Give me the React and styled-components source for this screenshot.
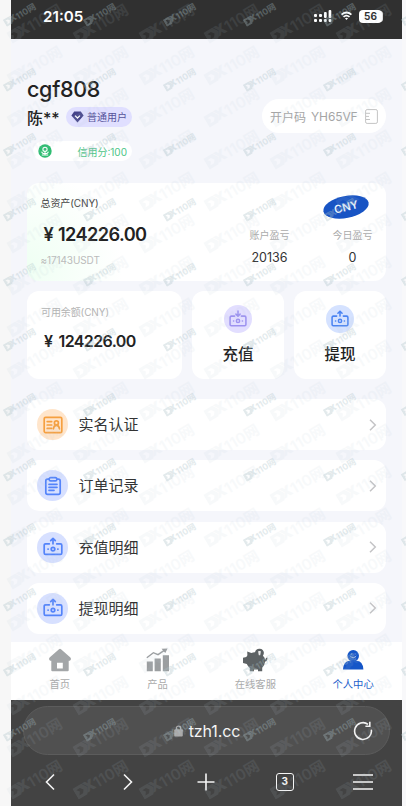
import styled, {createGlobalStyle} from 'styled-components'

const menus = [
  {id:1, name:'实名认证', icon:'card'},
  {id:2, name:'订单记录', icon:'order'},
  {id:3, name:'充值明细', icon:'money'},
  {id:4, name:'提现明细', icon:'money'},
]

const tabs = [
  {id:1, name:'首页', icon:'home'},
  {id:2, name:'产品', icon:'chart'},
  {id:3, name:'在线客服', icon:'pig'},
  {id:4, name:'个人中心', icon:'user'},
]

const MoneyIcon = ({size,down}) => (
  <svg width={size} height={size} viewBox="0 0 20 20" fill="none" stroke="currentColor" strokeWidth="1.7" strokeLinecap="round" strokeLinejoin="round">
    <path d="M6.3 6.8H2.6Q1.2 6.8 1.2 8.2V16Q1.2 17.4 2.6 17.4H17.4Q18.8 17.4 18.8 16V8.2Q18.8 6.8 17.4 6.8H13.7"/>
    <path d={down ? 'M10 1V6.6M7.7 4.6L10 6.9L12.3 4.6' : 'M10 6.8V1.4M7.7 3.6L10 1.3L12.3 3.6'}/>
    <circle cx="10" cy="12.1" r="1.8"/>
    <path d="M5 12.1H5.2M14.8 12.1H15"/>
  </svg>
)

const CardIcon = () => (
  <svg width="20" height="20" viewBox="0 0 20 20" fill="none" stroke="currentColor" strokeWidth="1.7" strokeLinecap="round" strokeLinejoin="round">
    <rect x="1.2" y="2.4" width="17.6" height="15.2" rx="1.4"/>
    <path d="M4.2 6.6H8.7M4.2 10H8.7M4.2 13.4H8.7"/>
    <circle cx="13.4" cy="7.9" r="2"/>
    <path d="M10.5 13.8Q10.7 10.3 13.4 10.3Q16.1 10.3 16.4 13.8"/>
  </svg>
)

const OrderIcon = () => (
  <svg width="20" height="20" viewBox="0 0 20 20" fill="none" stroke="currentColor" strokeWidth="1.7" strokeLinecap="round" strokeLinejoin="round">
    <path d="M6.2 3.2H4.6Q2.8 3.2 2.8 5V16.6Q2.8 18.4 4.6 18.4H15.4Q17.2 18.4 17.2 16.6V5Q17.2 3.2 15.4 3.2H13.8"/>
    <rect x="6.2" y="1.6" width="7.6" height="3.3" rx="1.4"/>
    <path d="M6 8.3H14M6 11.3H14M6 14.3H11"/>
  </svg>
)

const TabIcon = ({type}) => {
  if(type === 'home') return (
    <svg width="24" height="24" viewBox="0 0 24 24" fill="currentColor">
      <path fillRule="evenodd" d="M11 1.2Q12 .5 13 1.2L22.4 9.4Q23.8 11 22.2 12.4Q21.5 13 20.7 12.8V22.3Q20.7 23.3 19.7 23.3H4.3Q3.3 23.3 3.3 22.3V12.8Q2.5 13 1.8 12.4Q.2 11 1.6 9.4ZM9 14.8V20.6H14.8V14.8Z"/>
    </svg>
  )
  if(type === 'chart') return (
    <svg width="24" height="24" viewBox="0 0 24 24" fill="currentColor">
      <path d="M.8 13.5H6.8V23.3H.8ZM8.6 10.4H14.8V23.3H8.6ZM16.8 7.3H23V23.3H16.8Z"/>
      <path d="M.8 9.7L7.4 4.7L12 6.6L19 1.8" fill="none" stroke="currentColor" strokeWidth="1.4"/>
      <path d="M15.5.7L21.6 .5L19.3 5Z"/>
    </svg>
  )
  if(type === 'pig') return (
    <svg width="26" height="24" viewBox="0 0 26 24" fill="currentColor">
      <path d="M5.2 3.6L9.4 5Q11.3 4.2 13 4.3A4.5 4.5 0 0 1 21.9 4.8Q21.9 6.5 20.9 7.8Q22.8 9.5 23.1 11.4Q24 11.5 23.9 10L25.4 9.5Q25.7 13.3 23.2 13.6Q22.8 17.2 20.2 19.7V23.3H16V21.6H12V23.3H7.8V20Q5.8 18.4 4.8 16L1 15V9.7L4.3 9.1Q4.7 8.1 5.4 7.2Z"/>
      <path d="M16.3 2.9H18.7V4.8L18.2 7.2H16.8L16.3 4.8Z" fill="#fff" opacity=".85"/>
    </svg>
  )
  return (
    <svg width="24" height="24" viewBox="0 0 24 24" fill="currentColor">
      <circle cx="12.2" cy="7.8" r="5.8"/>
      <path d="M2 21.5Q2.4 12.9 9.2 12.7H15.2Q22 12.9 22.4 21.5Z"/>
      <path d="M9.4 8.2Q12.2 11.6 15 8.2M10.3 5.9V6.1M14.1 5.9V6.1" fill="none" stroke="#fff" strokeWidth=".9" strokeLinecap="round" opacity=".65"/>
    </svg>
  )
}

const Watermark = ({big}) => (
  <Mark>
    <MarkText $big={big}>
      <MarkLogo big={big}/>
      <b>X</b>110网
    </MarkText>
  </Mark>
)

const MarkLogo = ({big}) => (
  <svg width={big ? 14 : 9} height={big ? 14 : 9} viewBox="0 0 15 15" fill="currentColor">
    <path fillRule="evenodd" d="M0 1H11L15 7.5L11 14H0ZM3 4.2H7.5L10 7.5L7.5 10.8H3L5.5 7.5Z"/>
  </svg>
)

const App = () => (
  <Page>
    <GlobalStyle/>
    <Phone>
      <StatusBar>
        <Clock>21:05</Clock>
        <StatusIcons>
          <svg width="18" height="13" viewBox="0 0 18 13" fill="#fff">
            <rect x="0" y="4" width="3" height="3" rx="1"/><rect x="0" y="9" width="3" height="3" rx="1"/>
            <rect x="5" y="4" width="3" height="3" rx="1"/><rect x="5" y="9" width="3" height="3" rx="1"/>
            <rect x="10" y="2" width="2.7" height="6" rx="1"/><rect x="10" y="9" width="2.7" height="3" rx="1"/>
            <rect x="14.6" y="0" width="2.7" height="8" rx="1"/><rect x="14.6" y="9" width="2.7" height="3" rx="1"/>
          </svg>
          <svg width="11" height="10" viewBox="0 0 12 10" fill="none" stroke="#fff" strokeWidth="1.9">
            <path d="M.6 3.6Q6-1.2 11.4 3.6M2.7 6Q6 3.2 9.3 6"/>
            <path d="M4.3 7.4Q6 6.2 7.7 7.4L6 9.4Z" fill="#fff" stroke="none"/>
          </svg>
          <Battery>56</Battery>
        </StatusIcons>
      </StatusBar>

      <Content>
        <Profile>
          <div>
            <UserName>cgf808</UserName>
            <NameRow>
              <RealName>陈**</RealName>
              <Level>
                <svg width="13" height="12" viewBox="0 0 13 12">
                  <path d="M3.2.4H9.8L12.6 4.5L6.5 11.5L.4 4.5Z" fill="#45438a"/>
                  <path d="M4 4.6L6.5 7L9 4.6" fill="none" stroke="#fff" strokeWidth="1.3"/>
                </svg>
                普通用户
              </Level>
            </NameRow>
            <Credit>
              <svg width="14" height="14" viewBox="0 0 14 14">
                <circle cx="7" cy="7" r="6.7" fill="#2fbd72"/>
                <circle cx="7" cy="5.3" r="2.1" fill="none" stroke="#fff" strokeWidth="1.1"/>
                <path d="M3.7 7.7Q4.2 10.2 7 9.3Q9.8 10.2 10.3 7.7M3.8 11H10.2M7 7.6V10.8" fill="none" stroke="#fff" strokeWidth="1.1"/>
              </svg>
              <span>信用分:100</span>
            </Credit>
          </div>
          <Invite>
            <span>开户码</span>
            <Code>YH65VF</Code>
            <svg width="13" height="15" viewBox="0 0 13 15" fill="none" stroke="#c4c4c4" strokeWidth="1">
              <rect x=".6" y=".6" width="11.8" height="13.8" rx="1.5"/>
              <path d="M1 4.3H5M1 7.4H4M1 10.5H5"/>
            </svg>
          </Invite>
        </Profile>

        <AssetCard>
          <div>
            <AssetTitle>总资产(CNY)</AssetTitle>
            <Money $size={18.2}><Yen>¥</Yen>124226.00</Money>
            <Usdt>≈17143USDT</Usdt>
          </div>
          <AssetRight>
            <Coin><CoinText>CNY</CoinText></Coin>
            <Stats>
              <Stat><StatName>账户盈亏</StatName><StatNum>20136</StatNum></Stat>
              <Stat><StatName>今日盈亏</StatName><StatNum>0</StatNum></Stat>
            </Stats>
          </AssetRight>
        </AssetCard>

        <Actions>
          <Balance>
            <BalanceTitle>可用余额(CNY)</BalanceTitle>
            <Money $size={16}><Yen>¥</Yen>124226.00</Money>
          </Balance>
          <Action>
            <Round $size={28} $bg="#e2deff" $color="#9d92f0"><MoneyIcon size={18} down/></Round>
            <ActionName>充值</ActionName>
          </Action>
          <Action>
            <Round $size={28} $bg="#d5e2ff" $color="#4b84f2"><MoneyIcon size={18}/></Round>
            <ActionName>提现</ActionName>
          </Action>
        </Actions>

        <MenuList>
          {menus.map(item=>
            <MenuItem key={item.id}>
              <Round
                $size={31}
                $bg={item.icon === 'card' ? '#ffe5cb' : '#d7e0ff'}
                $color={item.icon === 'card' ? '#f6a040' : '#5484fa'}
              >
                {item.icon === 'card' && <CardIcon/>}
                {item.icon === 'order' && <OrderIcon/>}
                {item.icon === 'money' && <MoneyIcon size={20}/>}
              </Round>
              <MenuName>{item.name}</MenuName>
              <svg width="8" height="14" viewBox="0 0 8 14" fill="none" stroke="#c4c4c6" strokeWidth="1.5">
                <path d="M1 1.7L6.3 7L1 12.3"/>
              </svg>
            </MenuItem>
          )}
        </MenuList>
      </Content>

      <TabBar>
        {tabs.map(item=>
          <Tab key={item.id} $type={item.icon}>
            <TabIcon type={item.icon}/>
            <TabName $active={item.icon === 'user'}>{item.name}</TabName>
          </Tab>
        )}
      </TabBar>

      <Browser>
        <Address>
          <span/>
          <Url>
            <svg width="9" height="12" viewBox="0 0 9 12">
              <path d="M2.4 5V3Q2.4 1.2 4.5 1.2Q6.6 1.2 6.6 3V5" fill="none" stroke="#aaa" strokeWidth="1.2"/>
              <rect x=".2" y="4.2" width="8.6" height="7.3" rx="1" fill="#aaa"/>
            </svg>
            tzh1.cc
          </Url>
          <svg width="20" height="20" viewBox="0 0 20 20" fill="none" stroke="#f2f2f2" strokeWidth="1.6">
            <path d="M18.3 8.6A8.4 8.4 0 1 1 15 3.3"/>
            <path d="M16.8.8V5.2H12.4"/>
          </svg>
        </Address>
        <Tools>
          <svg width="10" height="18" viewBox="0 0 10 18" fill="none" stroke="#f5f5f5" strokeWidth="1.6"><path d="M9 1.5L1.5 9L9 16.5"/></svg>
          <svg width="10" height="18" viewBox="0 0 10 18" fill="none" stroke="#f5f5f5" strokeWidth="1.6"><path d="M1 1.5L8.5 9L1 16.5"/></svg>
          <svg width="18" height="18" viewBox="0 0 18 18" fill="none" stroke="#f5f5f5" strokeWidth="1.6"><path d="M9 .5V17.5M.5 9H17.5"/></svg>
          <PageCount>3</PageCount>
          <svg width="20" height="18" viewBox="0 0 20 18" fill="none" stroke="#f5f5f5" strokeWidth="1.5"><path d="M0 2H20M0 9H20M0 16H20"/></svg>
        </Tools>
      </Browser>
    </Phone>

    <BigMarks>
      {Array.from({length:114},(_,i)=><Watermark key={i} big/>)}
    </BigMarks>
    <SmallMarks>
      {Array.from({length:60},(_,i)=><Watermark key={i}/>)}
    </SmallMarks>
    <EdgeMarks>
      {Array.from({length:12},(_,i)=><MarkLogo key={i}/>)}
    </EdgeMarks>
  </Page>
)

export default App

const GlobalStyle = createGlobalStyle`
  *{
    box-sizing:border-box;
  }
  body{
    margin:0;
    font-family:Inter, "Noto Sans CJK SC", sans-serif;
  }
  svg{
    display:block;
    flex-shrink:0;
  }
`

const Page = styled.div`
  position:relative;
  width:406px;
  height:806px;
  overflow:hidden;
  padding:0 4px 0 11px;
  background:linear-gradient(to right, #f7f7f7 50%, #f8f8fa 50%);
`

const Phone = styled.div`
  height:806px;
  display:flex;
  flex-direction:column;
  background:#f5f6fb;
`

const StatusBar = styled.div`
  height:39px;
  display:flex;
  justify-content:space-between;
  padding:0 18px 7px 32px;
  align-items:center;
  background:#303030;
  color:#fff;
`

const Clock = styled.div`
  font-size:15.2px;
  font-weight:600;
`

const StatusIcons = styled.div`
  display:flex;
  align-items:center;
  gap:8.5px;
`

const Battery = styled.div`
  width:23px;
  height:13px;
  margin:0 2px 0 -1px;
  border-radius:4px;
  background:#fff;
  box-shadow:2px 0 0 -1px #ddd;
  color:#303030;
  font-size:10px;
  font-weight:700;
  line-height:13px;
  text-align:center;
`

const Content = styled.div`
  height:603px;
  padding:36px 16px 0;
`

const Profile = styled.div`
  height:108px;
  display:flex;
  justify-content:space-between;
`

const UserName = styled.div`
  height:28px;
  line-height:28px;
  font-size:21.5px;
  font-weight:500;
  letter-spacing:-0.3px;
  color:#222;
`

const NameRow = styled.div`
  display:flex;
  align-items:center;
  height:20px;
  margin-top:4px;
`

const RealName = styled.div`
  width:39px;
  padding-top:2px;
  font-size:16px;
  font-weight:500;
  line-height:20px;
  color:#222;
`

const Level = styled.div`
  width:66px;
  height:20px;
  display:flex;
  align-items:center;
  gap:3px;
  padding-left:5px;
  border-radius:10px;
  background:#e0dfff;
  color:#56539a;
  font-size:10px;
  line-height:20px;
  white-space:nowrap;
`

const Credit = styled.div`
  width:99px;
  height:20px;
  margin:14px 0 0 6px;
  padding:0 5px;
  display:flex;
  align-items:center;
  justify-content:space-between;
  border-radius:10px;
  background:#fff;
  color:#4bc586;
  font-size:10px;
`

const Invite = styled.div`
  width:124px;
  height:34px;
  margin-top:24px;
  padding:0 8px;
  display:flex;
  align-items:center;
  border-radius:17px;
  background:#fff;
  color:#a5a5a5;
  font-size:12px;
  white-space:nowrap;
`

const Code = styled.span`
  width:54px;
  margin-left:5px;
  letter-spacing:-0.1px;
`

const AssetCard = styled.div`
  height:98px;
  padding:12px 13.5px;
  display:flex;
  justify-content:space-between;
  border-radius:12px;
  background:radial-gradient(circle at 0 85%, #effff3 0, #fff 95px);
`

const AssetTitle = styled.div`
  height:16px;
  line-height:16px;
  font-size:10px;
  letter-spacing:-0.1px;
  color:#444;
`

const Money = styled.div`
  display:flex;
  height:27px;
  margin-top:10px;
  line-height:27px;
  font-size:${props => props.$size}px;
  font-weight:600;
  letter-spacing:-0.6px;
  color:#222;
`

const Yen = styled.span`
  width:17.5px;
  padding-left:3px;
`

const Usdt = styled.div`
  margin-top:5px;
  line-height:14px;
  font-size:10px;
  letter-spacing:-0.1px;
  color:#bbb;
`

const AssetRight = styled.div`
  display:flex;
  flex-direction:column;
  align-items:flex-end;
`

const Coin = styled.div`
  width:46px;
  height:22px;
  margin:1px 4px 1px 0;
  display:flex;
  align-items:center;
  justify-content:center;
  border-radius:50%;
  background:#1854c4;
  transform:rotate(-11deg);
`

const CoinText = styled.span`
  font-size:11px;
  font-weight:600;
  color:#e9f3ff;
  transform:rotate(-3deg);
`

const Stats = styled.div`
  display:flex;
  gap:43px;
  margin-top:8px;
`

const Stat = styled.div`
  width:40px;
  text-align:center;
`

const StatName = styled.div`
  line-height:16px;
  font-size:10px;
  color:#aaa;
`

const StatNum = styled.div`
  margin-top:5px;
  line-height:20px;
  font-size:12.5px;
  color:#333;
`

const Actions = styled.div`
  height:88px;
  margin-top:10px;
  display:grid;
  grid-template-columns:155px 92px 92px;
  gap:10px;
`

const Balance = styled.div`
  padding:13px 14px;
  border-radius:12px;
  background:#fff;
`

const BalanceTitle = styled.div`
  line-height:16px;
  font-size:10px;
  letter-spacing:-0.1px;
  color:#b3b3b3;
  & + div{
    margin-top:8px;
  }
`

const Action = styled.div`
  display:flex;
  flex-direction:column;
  align-items:center;
  padding-top:14px;
  border-radius:12px;
  background:#fff;
`

const ActionName = styled.div`
  margin-top:10px;
  line-height:24px;
  font-size:15.5px;
  font-weight:500;
  color:#222;
`

const Round = styled.div`
  width:${props => props.$size}px;
  height:${props => props.$size}px;
  display:flex;
  align-items:center;
  justify-content:center;
  border-radius:50%;
  background:${props => props.$bg};
  color:${props => props.$color};
`

const MenuList = styled.div`
  margin-top:20px;
  display:flex;
  flex-direction:column;
  gap:10.3px;
`

const MenuItem = styled.div`
  height:51px;
  padding:0 9px 0 10px;
  display:flex;
  align-items:center;
  border-radius:12px;
  background:#fff;
`

const MenuName = styled.div`
  flex:1;
  padding:1px 0 0 10.5px;
  font-size:15px;
  line-height:22px;
  color:#333;
`

const TabBar = styled.div`
  height:58px;
  display:grid;
  grid-template-columns:repeat(4, 1fr);
  background:#fff;
`

const tabColors = {home:'#a3a6a8', chart:'#9b9ea0', pig:'#5d6264', user:'#1556c8'}

const Tab = styled.div`
  display:flex;
  flex-direction:column;
  align-items:center;
  padding-top:6px;
  color:${props => tabColors[props.$type]};
`

const TabName = styled.div`
  margin-top:4px;
  font-size:10.3px;
  line-height:16px;
  color:${props => props.$active ? '#2461cb' : '#aaa'};
`

const Browser = styled.div`
  height:106px;
  padding:6px 12px 0;
  background:#434343;
`

const Address = styled.div`
  height:49px;
  padding:0 16px 0 20px;
  display:grid;
  grid-template-columns:20px 1fr 20px;
  align-items:center;
  border:1px solid #5c5c5c;
  border-radius:25px;
  background:#505050;
`

const Url = styled.div`
  display:flex;
  align-items:center;
  justify-content:center;
  gap:6px;
  padding-right:3px;
  font-size:16px;
  letter-spacing:-0.1px;
  color:#f5f5f5;
`

const Tools = styled.div`
  height:51px;
  margin:0 -12px;
  padding-top:2px;
  display:grid;
  grid-template-columns:repeat(5, 1fr);
  align-items:center;
  justify-items:center;
`

const PageCount = styled.div`
  width:18px;
  height:18px;
  border:1.5px solid #f5f5f5;
  border-radius:3px;
  color:#f5f5f5;
  font-size:10px;
  font-weight:700;
  line-height:15px;
  text-align:center;
`

// repeated watermark lying over the whole page
const Marks = styled.div`
  position:absolute;
  display:grid;
  pointer-events:none;
`

const BigMarks = styled(Marks)`
  left:2px;
  top:1px;
  grid-template-columns:repeat(6, 65.7px);
  grid-auto-rows:42px;
`

const SmallMarks = styled(Marks)`
  left:-20px;
  top:-19px;
  grid-template-columns:repeat(5, 80px);
  grid-auto-rows:65px;
`

// only the logos fit in the last strip on the right
const EdgeMarks = styled(Marks)`
  left:402px;
  top:16px;
  grid-auto-rows:65px;
  color:rgb(172,194,200);
  opacity:0.33;
  svg{
    transform:rotate(-31deg);
  }
`

const Mark = styled.div`
  display:flex;
  align-items:center;
  justify-content:center;
`

const MarkText = styled.span`
  display:flex;
  align-items:center;
  font-size:${props => props.$big ? 15 : 8.6}px;
  font-weight:${props => props.$big ? 600 : 700};
  white-space:nowrap;
  color:${props => props.$big ? 'rgb(185,203,215)' : 'rgb(172,194,200)'};
  opacity:${props => props.$big ? 0.1 : 0.33};
  transform:rotate(-31deg);
  svg{
    margin-right:${props => props.$big ? -4 : -2.5}px;
  }
  b{
    font-weight:900;
  }
`
